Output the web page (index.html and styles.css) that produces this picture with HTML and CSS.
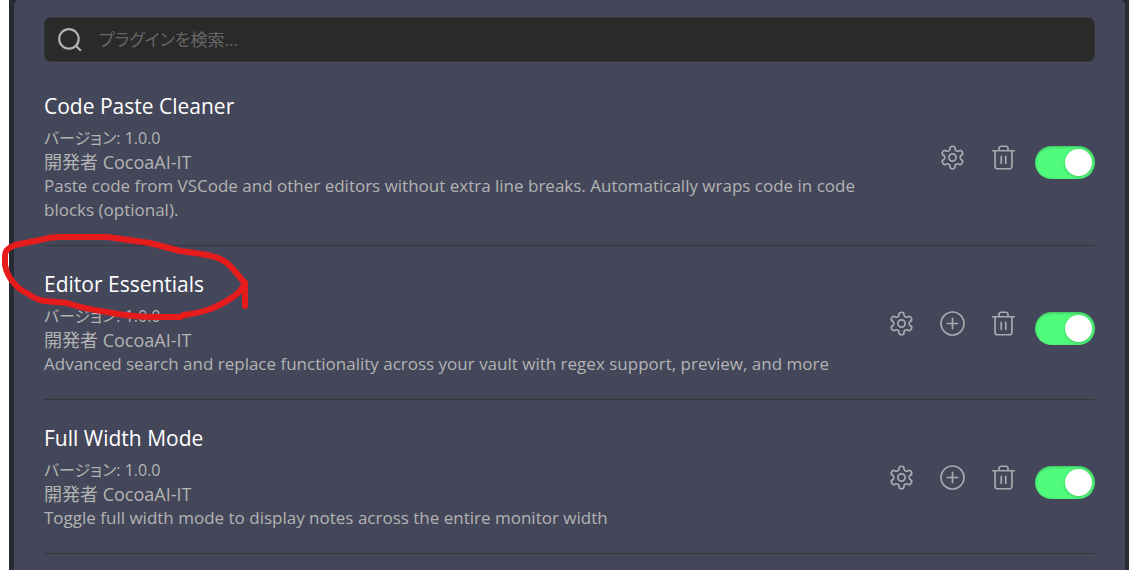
FILE: index.html
```html
<!doctype html>
<html lang="ja">
<head>
  <meta charset="utf-8">
  <meta name="viewport" content="width=device-width, initial-scale=1">
  <title>プラグイン</title>
  <link rel="stylesheet" href="styles.css">
</head>
<body>

  <!-- icons shared by all rows -->
  <svg class="sprite" aria-hidden="true">
    <symbol id="icon-settings" viewBox="0 0 24 24">
      <path d="M12.22 2h-.44a2 2 0 0 0-2 2v.18a2 2 0 0 1-1 1.73l-.43.25a2 2 0 0 1-2 0l-.15-.08a2 2 0 0 0-2.73.73l-.22.38a2 2 0 0 0 .73 2.73l.15.1a2 2 0 0 1 1 1.72v.51a2 2 0 0 1-1 1.74l-.15.09a2 2 0 0 0-.73 2.73l.22.38a2 2 0 0 0 2.73.73l.15-.08a2 2 0 0 1 2 0l.43.25a2 2 0 0 1 1 1.73V20a2 2 0 0 0 2 2h.44a2 2 0 0 0 2-2v-.18a2 2 0 0 1 1-1.73l.43-.25a2 2 0 0 1 2 0l.15.08a2 2 0 0 0 2.73-.73l.22-.39a2 2 0 0 0-.73-2.73l-.15-.08a2 2 0 0 1-1-1.74v-.5a2 2 0 0 1 1-1.74l.15-.09a2 2 0 0 0 .73-2.73l-.22-.38a2 2 0 0 0-2.73-.73l-.15.08a2 2 0 0 1-2 0l-.43-.25a2 2 0 0 1-1-1.73V4a2 2 0 0 0-2-2z"/>
      <circle cx="12" cy="12" r="3.2"/>
    </symbol>
    <symbol id="icon-plus" viewBox="0 0 24 24">
      <circle cx="12" cy="12" r="10.2"/>
      <path d="M7.5 12h9M12 7.5v9"/>
    </symbol>
    <symbol id="icon-trash" viewBox="0 0 24 24">
      <path d="M2.5 6h19M19.5 6v14c0 1-1 2-2 2H6.500c-1 0-2-1-2-2V6M8 6V4c0-1 1-2 2-2h4c1 0 2 1 2 2v2M10 11v6M14 11v6"/>
    </symbol>
  </svg>

  <main class="modal">
    <div class="content">

      <label class="search">
        <svg class="search-icon" viewBox="0 0 24 24" aria-hidden="true">
          <circle cx="11" cy="11" r="9"/>
          <path d="M22 22l-4.6-4.6"/>
        </svg>
        <input type="search" class="search-input" placeholder="プラグインを検索..." aria-label="プラグインを検索">
      </label>

      <section class="plugin">
        <div class="info">
          <h2 class="name" id="cleaner">Code Paste Cleaner</h2>
          <p class="version">バージョン: 1.0.0</p>
          <p class="author">開発者 CocoaAI-IT</p>
          <p>Paste code from VSCode and other editors without extra line breaks. Automatically wraps code in code blocks (optional).</p>
        </div>
        <div class="controls">
          <button class="icon-button" aria-label="設定"><svg><use href="#icon-settings"/></svg></button>
          <button class="icon-button" aria-label="削除"><svg><use href="#icon-trash"/></svg></button>
          <input type="checkbox" class="toggle" aria-labelledby="cleaner" checked>
        </div>
      </section>

      <section class="plugin">
        <div class="info">
          <h2 class="name" id="essentials">Editor Essentials</h2>
          <p class="version">バージョン: 1.0.0</p>
          <p class="author">開発者 CocoaAI-IT</p>
          <p>Advanced search and replace functionality across your vault with regex support, preview, and more</p>
        </div>
        <div class="controls">
          <button class="icon-button" aria-label="設定"><svg><use href="#icon-settings"/></svg></button>
          <button class="icon-button" aria-label="ホットキー"><svg><use href="#icon-plus"/></svg></button>
          <button class="icon-button" aria-label="削除"><svg><use href="#icon-trash"/></svg></button>
          <input type="checkbox" class="toggle" aria-labelledby="essentials" checked>
        </div>
        <!-- hand-drawn marker round the plugin name -->
        <svg class="marker" viewBox="0 0 260 90" aria-hidden="true">
          <path d="M245 52 Q241 46 233 37 Q226 29 218 26 Q212 23 180 19 L150 11 L107 5 L60 5 Q50 5 40 8 L15 13 Q5 17 5 23 L5 33 Q7 43 13 50 Q19 58 27 61 Q36 68 45 69 L67 71 Q85 77 107 80 Q130 85 157 85 L180 85 L184 83 Q200 81 213 76 Q226 70 233 65 Q244 57 245 50 L245 74"/>
        </svg>
      </section>

      <section class="plugin">
        <div class="info">
          <h2 class="name" id="fullwidth">Full Width Mode</h2>
          <p class="version">バージョン: 1.0.0</p>
          <p class="author">開発者 CocoaAI-IT</p>
          <p>Toggle full width mode to display notes across the entire monitor width</p>
        </div>
        <div class="controls">
          <button class="icon-button" aria-label="設定"><svg><use href="#icon-settings"/></svg></button>
          <button class="icon-button" aria-label="ホットキー"><svg><use href="#icon-plus"/></svg></button>
          <button class="icon-button" aria-label="削除"><svg><use href="#icon-trash"/></svg></button>
          <input type="checkbox" class="toggle" aria-labelledby="fullwidth" checked>
        </div>
      </section>

    </div>
  </main>

</body>
</html>
```
FILE: styles.css
```css
* {
  box-sizing: border-box;
}
body {
  margin: 0;
  background: #ffffff;
  color: #b3b3b3;
  font-family: "Open Sans", "Noto Sans CJK JP", sans-serif;
  font-size: 17px;
  line-height: 24px;
  font-feature-settings: "palt";
}
.sprite {
  display: none;
}
.modal {
  display: flex;
  min-height: 100vh;
  margin-left: 9px;
  padding: 0 4px 0 5px;
  background: #282a36;
}
.content {
  flex: 1;
  padding: 17px 30px 0;
  background: #44475a;
  border-radius: 5px 5px 0 0;
}

.search {
  display: flex;
  align-items: center;
  gap: 16px;
  height: 45px;
  margin-bottom: 6px;
  padding: 0 12px;
  background: #2a2a2a;
  border: 1px solid #363636;
  border-radius: 7px;
}
.search-icon {
  width: 26px;
  height: 26px;
  fill: none;
  stroke: #b3b3b3;
  stroke-width: 2;
}
.search-input {
  flex: 1;
  min-width: 0;
  padding: 0;
  border: none;
  outline: none;
  background: none;
  color: #dcddde;
  font: inherit;
  font-size: 17px;
  font-feature-settings: inherit;
}
.search-input::placeholder {
  color: #666666;
}

.plugin {
  position: relative;
  display: flex;
  align-items: center;
  gap: 32px;
  padding: 24px 0 23px;
  border-bottom: 1px solid #363636;
}
.info {
  flex: 1;
}
.info p {
  margin: 0;
}
.name {
  margin: 0 0 6px;
  color: #ffffff;
  font-size: 21px;
  font-weight: 400;
  line-height: 28px;
}
.version {
  font-size: 16px;
}
.author {
  font-size: 18px;
}

.controls {
  display: flex;
  align-items: center;
  gap: 12px;
}
.icon-button {
  display: flex;
  padding: 6px;
  border: none;
  background: none;
  color: #a9aab0;
  cursor: pointer;
}
.icon-button svg {
  width: 27px;
  height: 27px;
  fill: none;
  stroke: currentColor;
  stroke-width: 1.5;
  stroke-linecap: round;
  stroke-linejoin: round;
}
.toggle {
  appearance: none;
  width: 60px;
  height: 33px;
  margin: 11px 0 0;
  padding: 3px;
  border-radius: 17px;
  background: #6272a4;
  box-shadow: inset 0 1px 3px rgba(0, 0, 0, 0.25);
  cursor: pointer;
}
.toggle::before {
  content: "";
  display: block;
  width: 27px;
  height: 27px;
  border-radius: 50%;
  background: #ffffff;
  box-shadow: 0 1px 3px rgba(0, 0, 0, 0.2);
}
.toggle:checked {
  background: #50fa7b;
}
.toggle:checked::before {
  margin-left: auto;
}

.marker {
  position: absolute;
  top: -14px;
  left: -44px;
  width: 260px;
  height: 90px;
  fill: none;
  stroke: #e61c1c;
  stroke-width: 6;
  stroke-linecap: round;
  stroke-linejoin: round;
  pointer-events: none;
}
```
